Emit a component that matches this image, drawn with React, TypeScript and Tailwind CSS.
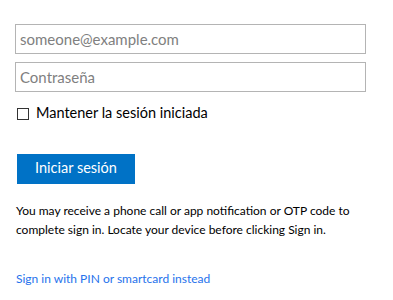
import React from "react";

export default function App() {
  const font = { fontFamily: 'Lato, "Open Sans", sans-serif' };
  return (
    <div className="w-[393px] h-[300px] bg-white overflow-hidden" style={font}>
      <div className="pl-[15px] pt-[24px] flex flex-col items-start">
        <input
          className="block w-[351px] h-[30px] border border-[#b4b4b4] bg-white px-[4px] text-[15px] text-[#222] placeholder:text-[#808080] outline-none"
          placeholder="someone@example.com"
        />
        <input
          type="password"
          className="block mt-[8px] w-[351px] h-[30px] border border-[#b4b4b4] bg-white px-[4px] text-[15px] text-[#222] placeholder:text-[#808080] outline-none"
          placeholder="Contraseña"
        />
        <label className="mt-[11px] flex items-start h-[20px]">
          <span className="mt-[5px] ml-[2px] w-[12px] h-[12px] border border-[#333] bg-white shrink-0" />
          <span className="ml-[7px] text-[14.5px] text-black leading-[20px] whitespace-nowrap">
            Mantener la sesión iniciada
          </span>
        </label>
        <button className="mt-[31px] ml-[2px] w-[118px] h-[30px] pb-[2px] bg-[#0072c6] text-white text-[14.5px] leading-[28px] text-center">
          Iniciar sesión
        </button>
        <p className="mt-[17px] ml-[1px] w-[350px] text-[12px] leading-[19px] text-black">
          You may receive a phone call or app notification or OTP code to complete sign in. Locate your device before clicking Sign in.
        </p>
        <a className="mt-[30px] ml-[1px] text-[12px] leading-[19px] text-[#2672ec] whitespace-nowrap">
          Sign in with PIN or smartcard instead
        </a>
      </div>
    </div>
  );
}
